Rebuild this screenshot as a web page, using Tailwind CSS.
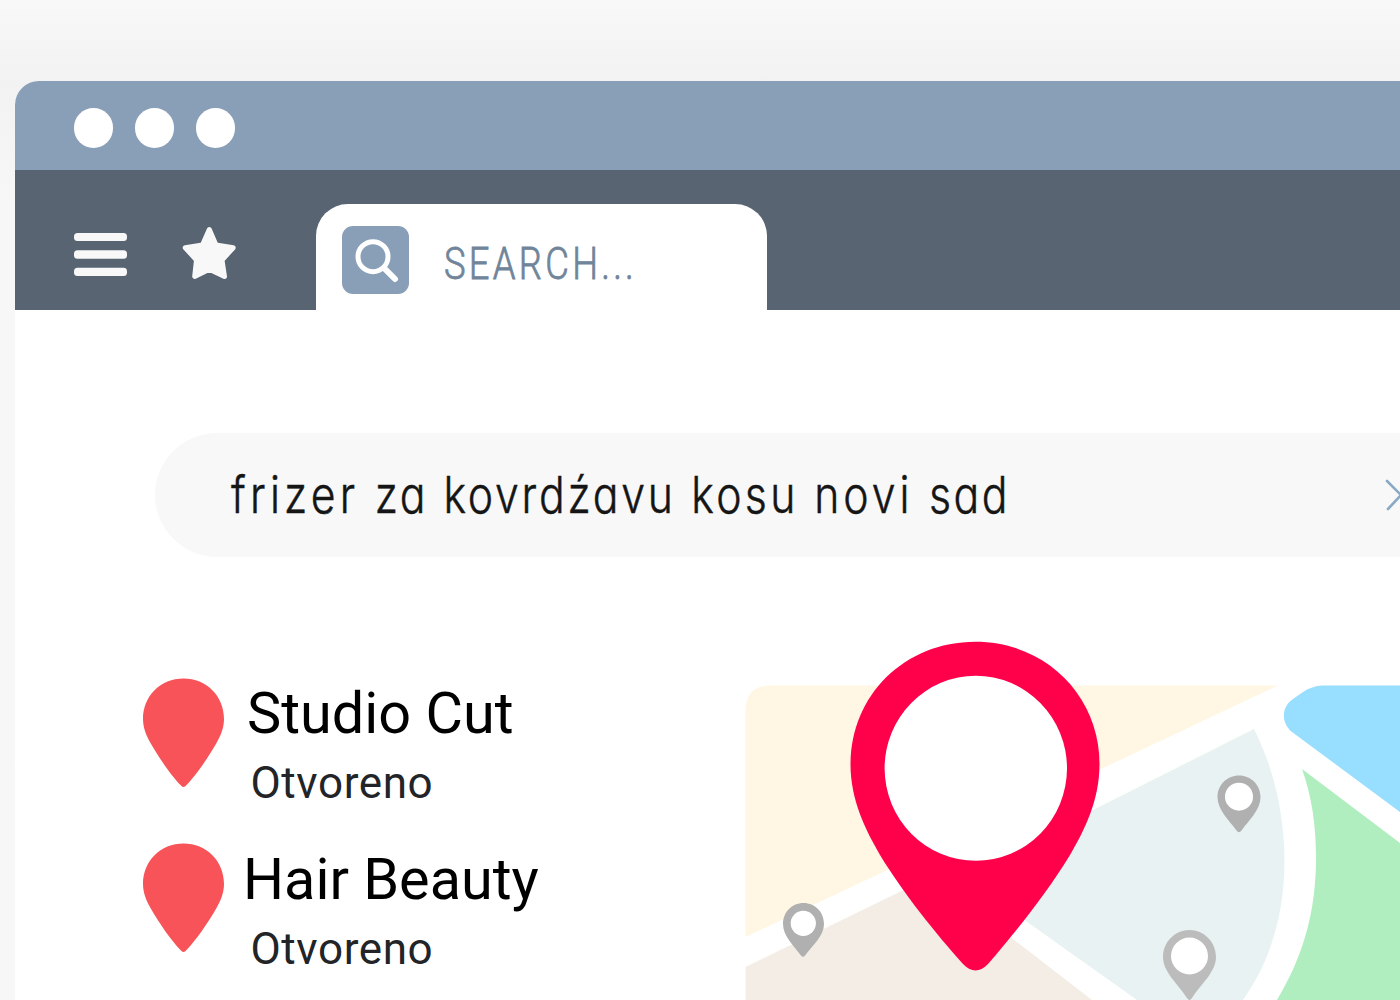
<!DOCTYPE html>
<html lang="sr">
<head>
    <meta charset="UTF-8">
    <meta name="viewport" content="width=device-width, initial-scale=1.0">
    <title>Frizer Novi Sad</title>
    <script src="https://cdn.jsdelivr.net/npm/@tailwindcss/browser@4"></script>
</head>
<body class="h-screen overflow-hidden bg-linear-to-b from-[#f8f8f8] from-0% via-[#f2f2f2] via-8% to-[#f7f7f7] to-20%">
    <div class="mt-[81px] ml-[15px] h-[919px] overflow-hidden rounded-tl-3xl bg-white">
        <!-- Window bar -->
        <div class="flex h-[89px] items-center gap-[21.5px] bg-[#899fb7] pl-[58.5px]">
            <span class="mt-[5px] size-[39.5px] rounded-full bg-white"></span>
            <span class="mt-[5px] size-[39.5px] rounded-full bg-white"></span>
            <span class="mt-[5px] size-[39.5px] rounded-full bg-white"></span>
        </div>

        <!-- Toolbar -->
        <header class="flex h-[139.5px] items-end bg-[#596473] pl-[59px]">
            <svg class="mb-[34px] h-[43px] w-[53px]" viewBox="0 0 53 43" fill="#f8f8f8">
                <rect y="0" width="53" height="8" rx="3.5" />
                <rect y="17.3" width="53" height="8.4" rx="3.5" />
                <rect y="34.7" width="53" height="8.3" rx="3.5" />
            </svg>
            <svg class="mb-[30px] ml-[55px] h-[54px] w-[54px]" viewBox="0 0 54 54" fill="#f8f8f8" stroke="#f8f8f8" stroke-width="5" stroke-linejoin="round">
                <path d="M27.3 3.5L34 19L51.2 21.7L40 34L42.5 50.5L27.3 43.2L12.7 50.5L14.5 34L3.3 21.7L20.5 19Z" />
            </svg>
            <div class="ml-20 flex h-[106px] w-[451px] items-start rounded-t-[32px] bg-white pt-[22.5px] pl-[26px]">
                <svg class="h-[68px] w-[67px] shrink-0" viewBox="0 0 67 68">
                    <rect width="67" height="68" rx="11" fill="#899fb7" />
                    <circle cx="31" cy="30.7" r="15" fill="none" stroke="#fff" stroke-width="5" />
                    <path d="M42 42L53 53" stroke="#fff" stroke-width="6" stroke-linecap="round" />
                </svg>
                <span class="mt-[8px] ml-[35px] origin-left scale-x-[.81] font-[Roboto] text-[45px] leading-[60px] font-light tracking-[4px] whitespace-nowrap text-[#71859a] [-webkit-text-stroke:0.8px_#71859a]">SEARCH...</span>
            </div>
        </header>

        <main>
            <!-- Search query -->
            <div class="mt-[123.5px] ml-[140px] flex h-[124px] items-center rounded-l-full bg-[#f8f8f8] pl-[76px]">
                <span class="w-[1154px] shrink-0 origin-left scale-x-[.838] font-[Inter] text-[51px] font-light tracking-[4px] whitespace-nowrap text-[#151515] [-webkit-text-stroke:0.5px_#151515] [font-feature-settings:'cv11']"><span class="tracking-[5px]">frizer</span> <span class="tracking-[3px]">za</span> <span class="tracking-[3.3px]">kovrdźavu</span> kosu <span class="tracking-[4.8px]">novi</span> <span class="tracking-[3px]">sad</span></span>
                <svg class="h-[32px] w-[18px] shrink-0" viewBox="0 0 18 32" fill="none" stroke="#8aa9c4" stroke-width="2.6" stroke-linecap="round">
                    <path d="M2 2L16 16L3 30" />
                </svg>
            </div>

            <div class="flex">
                <!-- Results -->
                <ul class="w-[601px] shrink-0 pt-[121px] pl-[128px]">
                    <li class="flex h-[164.5px]">
                        <svg class="h-[110px] w-[82px] shrink-0" viewBox="0.5 0 82 110" fill="#f75359">
                            <path d="M41 .5C18 .5 .5 18 .5 41C.5 50 4 58 8 65C16 79 29 98 38 107Q41 111 44 107C53 98 66 79 74 65C78 58 81.5 50 81.5 41C81.5 18 64 .5 41 .5Z" />
                        </svg>
                        <div class="ml-[22px] font-[Roboto]">
                            <h2 class="mt-[2px] text-[57.6px] leading-[68px] text-black">Studio Cut</h2>
                            <p class="mt-[3px] ml-[3.5px] text-[44px] leading-[64px] tracking-[.6px] text-[#222428]">Otvoreno</p>
                        </div>
                    </li>
                    <li class="flex h-[164.5px]">
                        <svg class="h-[110px] w-[82px] shrink-0" viewBox="0.5 0 82 110" fill="#f75359">
                            <path d="M41 .5C18 .5 .5 18 .5 41C.5 50 4 58 8 65C16 79 29 98 38 107Q41 111 44 107C53 98 66 79 74 65C78 58 81.5 50 81.5 41C81.5 18 64 .5 41 .5Z" />
                        </svg>
                        <div class="ml-[18px] font-[Roboto]">
                            <h2 class="mt-[3px] text-[57.6px] leading-[68px] text-black">Hair Beauty</h2>
                            <p class="mt-[3px] ml-[7.5px] text-[44px] leading-[64px] tracking-[.6px] text-[#222428]">Otvoreno</p>
                        </div>
                    </li>
                </ul>

                <!-- Map -->
                <svg class="mt-[83px] ml-[129px] h-[360px] w-[655px] shrink-0" viewBox="745 640 655 360">
                    <path d="M745.5 937V711Q745.5 685.5 771 685.5H1278Z" fill="#fff7e4" />
                    <path d="M745.5 967L1000 843V929L1092 1000H745.5Z" fill="#f4ede6" />
                    <path d="M960 877L1254 729C1275 771 1284 815 1284.5 860C1284.5 915 1270 962 1243 1000H1137L1016 914Z" fill="#e8f2f3" />
                    <path d="M1400 685.5H1322Q1312 686 1303 692L1293 699C1280 708 1282 724 1292 732L1400 812Z" fill="#98deff" />
                    <path d="M1302 769L1400 843V1000H1277C1304 955 1316 910 1316 858C1316 826 1312 797 1302 769Z" fill="#b0eebf" />

                    <!-- Other places -->
                    <path fill="#b0b0b0" d="M803.5 903C792 903 783 912 783 924C783 936 794 946 801 955.5Q803 958 805 955.5C812 946 824 936 824 924C824 912 815 903 803.5 903Z" />
                    <circle cx="803.3" cy="923.3" r="12.6" fill="#fff" />
                    <path fill="#b0b0b0" d="M1239 775.5C1227 775.5 1217.5 785 1217.5 797C1217.5 810 1229 820 1236.5 830.5Q1239 834 1241.5 830.5C1249 820 1260.5 810 1260.5 797C1260.5 785 1251 775.5 1239 775.5Z" />
                    <circle cx="1239" cy="796.7" r="14" fill="#fff" />
                    <path fill="#bcbcbc" d="M1189.5 930C1175 930 1163 942 1163 957C1163 972 1178 984 1187 998Q1189.5 1002 1192 998C1201 984 1216 972 1216 957C1216 942 1204 930 1189.5 930Z" />
                    <circle cx="1189.5" cy="956" r="18.5" fill="#fff" />

                    <!-- Selected place -->
                    <path fill="#ff004a" d="M975.5 641.8C904 641.8 850.5 696 850.5 764C850.5 800 865 829 880 855C903 893 936 934 963 964Q975.5 977 988 964C1014 934 1047 893 1070 855C1085 829 1099.5 800 1099.5 764C1099.5 696 1046 641.8 975.5 641.8Z" />
                    <ellipse cx="975.8" cy="768.3" rx="91.2" ry="92.5" fill="#fff" />
                </svg>
            </div>
        </main>
    </div>
</body>
</html>
